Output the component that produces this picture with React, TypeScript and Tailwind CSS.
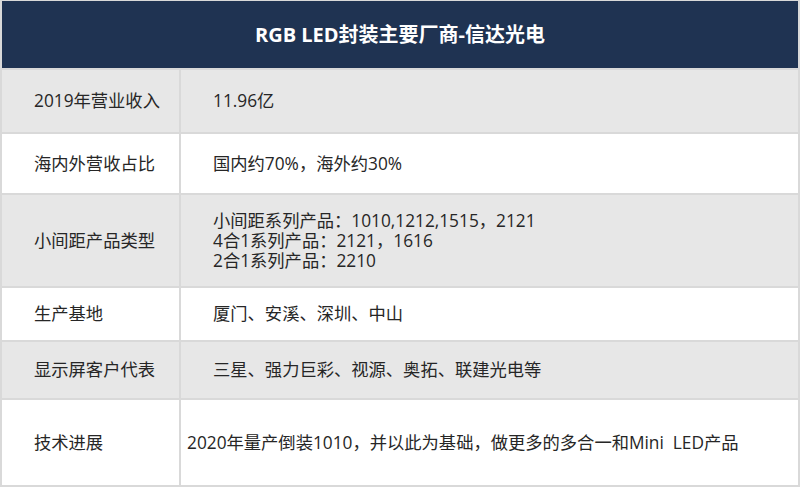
const rows: { label: string; value: string[]; h: string; pad: string }[] = [
  { label: "2019年营业收入", value: ["11.96亿"], h: "h-[62px]", pad: "pl-[32px]", },
  { label: "海内外营收占比", value: ["国内约70%，海外约30%"], h: "h-[59px]", pad: "pl-[32px]" },
  {
    label: "小间距产品类型",
    value: ["小间距系列产品：1010,1212,1515，2121", "4合1系列产品：2121，1616", "2合1系列产品：2210"],
    h: "h-[91px]",
    pad: "pl-[32px]",
  },
  { label: "生产基地", value: ["厦门、安溪、深圳、中山"], h: "h-[52px]", pad: "pl-[32px]" },
  { label: "显示屏客户代表", value: ["三星、强力巨彩、视源、奥拓、联建光电等"], h: "h-[56px]", pad: "pl-[32px]" },
  { label: "技术进展", value: ["2020年量产倒装1010，并以此为基础，做更多的多合一和Mini  LED产品"], h: "h-[85px]", pad: "pl-[6px]" },
]

export default function App() {
  return (
    <div
      className="w-[800px] h-[487px] bg-[#d9d9d9] p-[2px] pt-[1px] text-[#262626]"
      style={{ fontFamily: '"Open Sans", "Noto Sans CJK SC", sans-serif' }}
    >
      <div className="h-[67px] bg-[#1f3352] flex items-center justify-center text-white font-bold text-[20px]">
        RGB LED封装主要厂商-信达光电
      </div>
      <div className="grid grid-cols-[177px_1fr] gap-[2px] mt-[2px]">
        {rows.map((r, i) => {
          const bg = i % 2 === 0 ? "bg-[#e7e7e7]" : "bg-white"
          return (
            <div key={r.label} className="contents">
              <div className={`${r.h} ${bg} flex items-center pl-[32px] text-[17.3px]`}>{r.label}</div>
              <div className={`${r.h} ${bg} flex flex-col justify-center ${r.pad} text-[17.3px] leading-[20px] whitespace-pre`}>
                {r.value.map((v) => (
                  <div key={v}>{v}</div>
                ))}
              </div>
            </div>
          )
        })}
      </div>
    </div>
  )
}
